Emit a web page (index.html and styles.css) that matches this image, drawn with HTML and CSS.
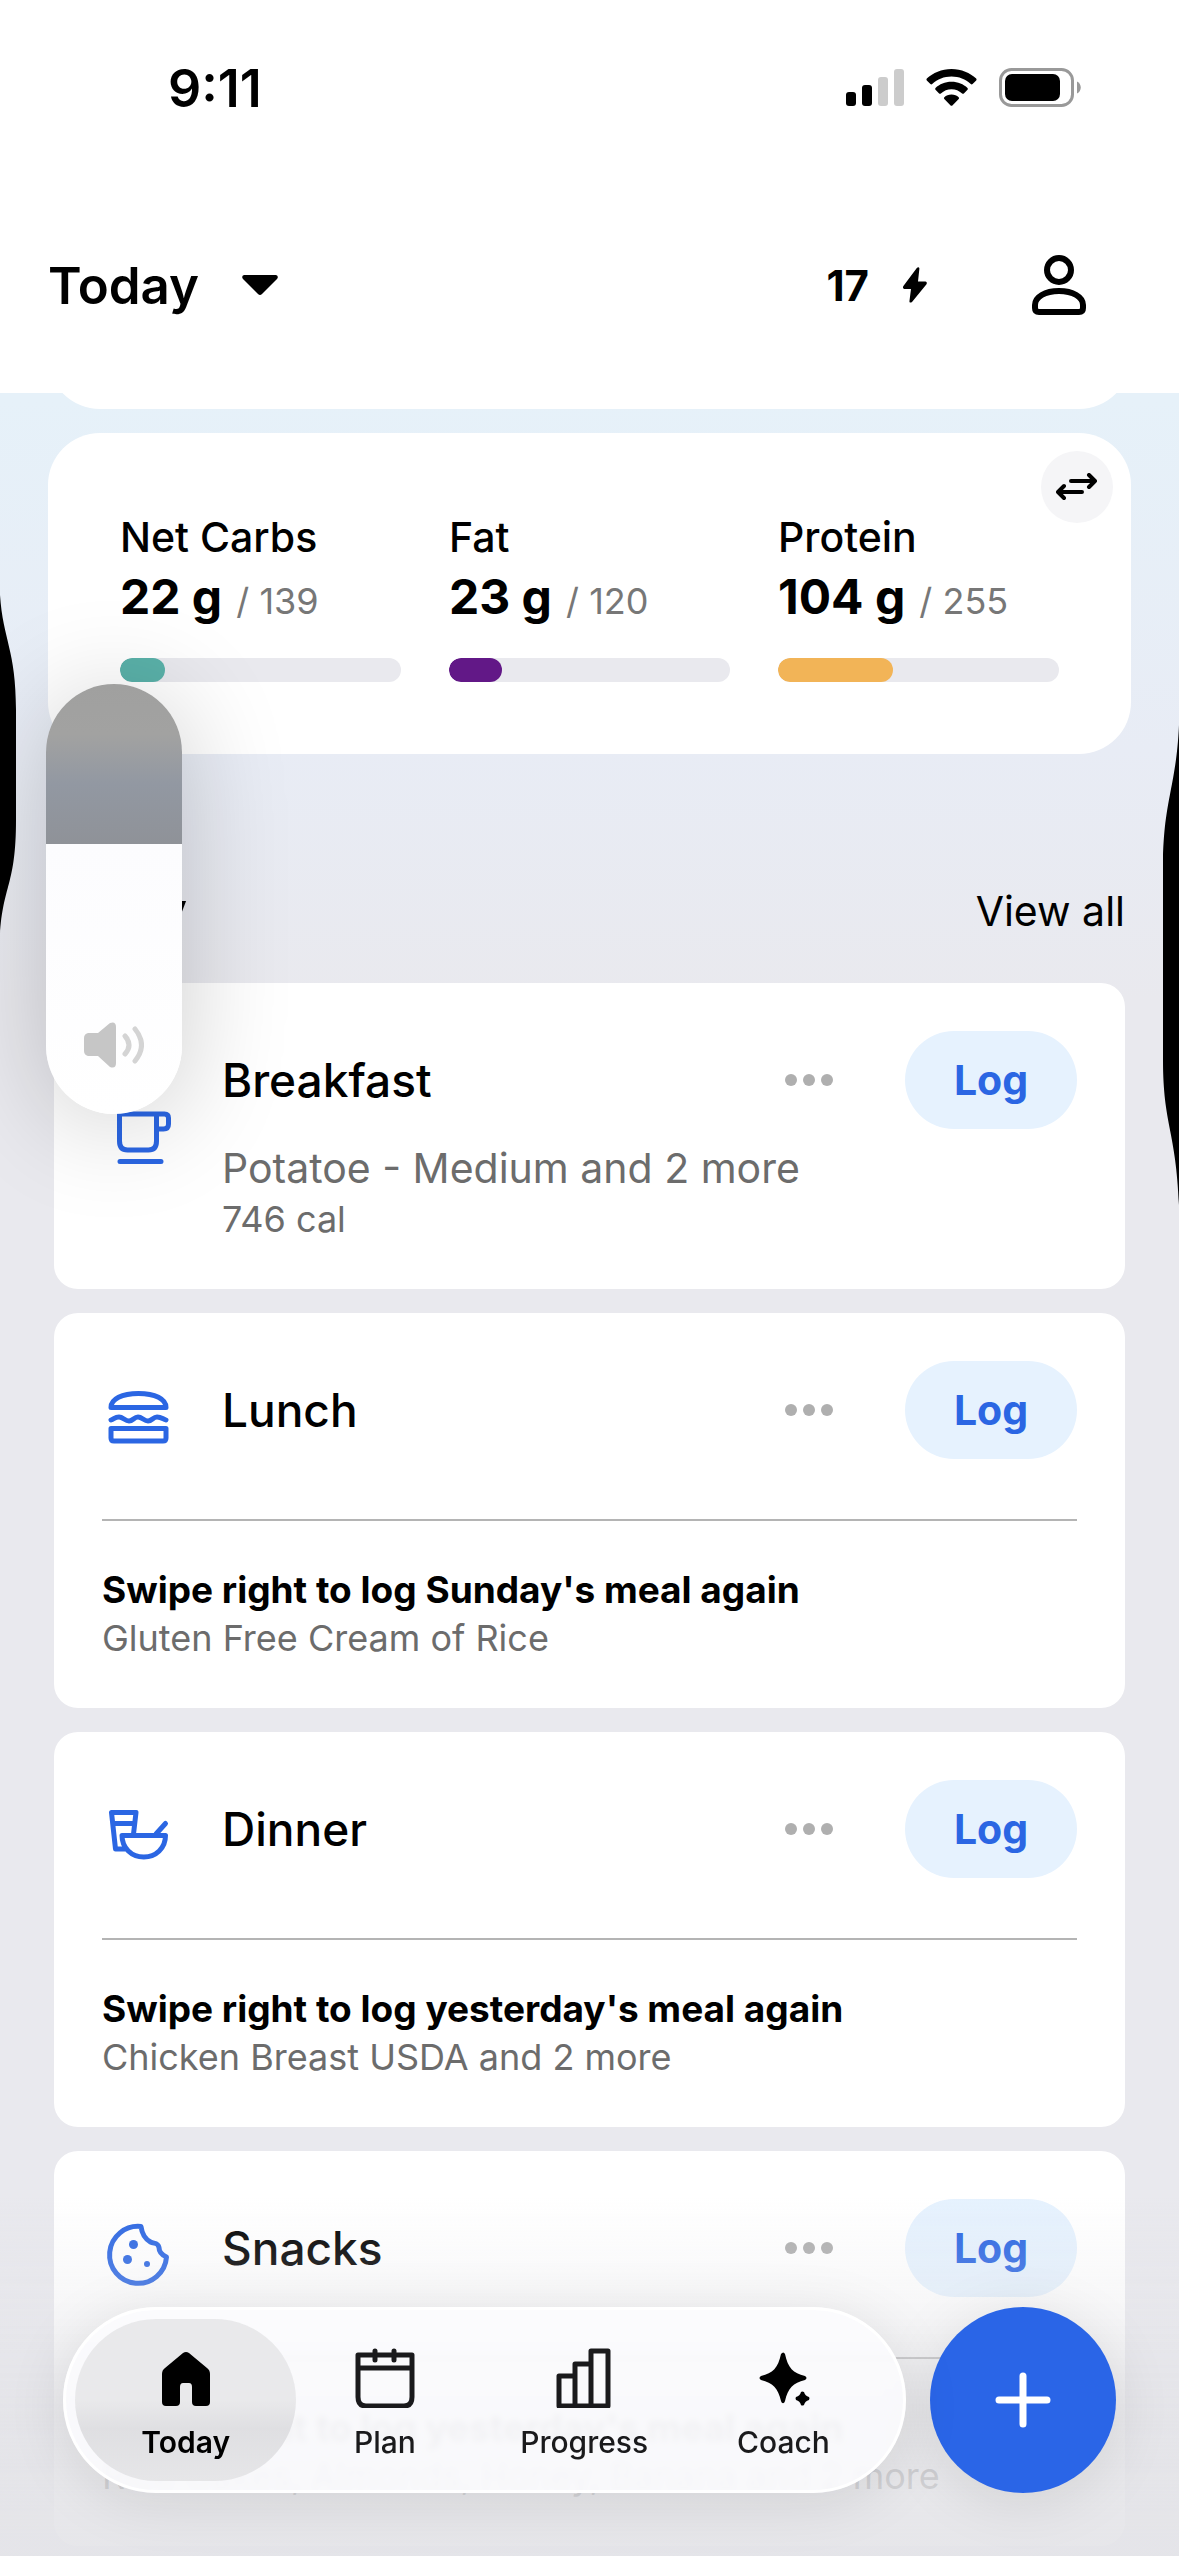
FILE: index.html
```html
<!DOCTYPE html>
<html lang="en">
<head>
    <meta charset="UTF-8">
    <meta name="viewport" content="width=device-width, initial-scale=1">
    <title>Today</title>
    <link rel="stylesheet" href="styles.css">
</head>
<body>
    <header class="header">
        <div class="status">
            <span class="clock">9:11</span>
            <div class="status-icons">
                <svg width="58" height="38" viewBox="0 0 58 38">
                    <rect x="0" y="23" width="10" height="14" rx="3"/>
                    <rect x="16" y="16" width="10" height="21" rx="3"/>
                    <rect x="32" y="8" width="10" height="29" rx="3" fill="#ccc"/>
                    <rect x="48" y="0" width="10" height="37" rx="3" fill="#ccc"/>
                </svg>
                <svg width="51" height="38" viewBox="0 0 51 38">
                    <path d="M25.500 0C35.500 0 44 4 50.200 9.600q.8.900 0 1.800L46.600 15q-.9.800-1.800 0C39.500 10.200 33 7.500 25.500 7.500S11.500 10.200 6.200 15q-.9.800-1.800 0L.8 11.400q-.8-.9 0-1.800C7 4 15.500 0 25.500 0z"/>
                    <path d="M25.500 12.800c6.500 0 12 2.400 16 6.200q.8.900 0 1.800l-3.600 3.600q-.9.800-1.800 0c-3-2.700-6.500-4.200-10.600-4.200s-7.600 1.500-10.600 4.200q-.9.800-1.800 0l-3.600-3.600q-.8-.9 0-1.800c4-3.800 9.500-6.200 16-6.200z"/>
                    <path d="M25.500 25.600c3 0 5.300 1 7.200 2.700q.8.900 0 1.800l-6.300 6.300q-.9.800-1.800 0l-6.300-6.300q-.8-.9 0-1.800c1.900-1.700 4.200-2.700 7.200-2.700z"/>
                </svg>
                <svg width="82" height="40" viewBox="0 0 82 40">
                    <rect x="1.500" y="1.500" width="72" height="36" rx="11" fill="none" stroke="#999" stroke-width="3"/>
                    <rect x="6" y="6" width="55" height="27" rx="7"/>
                    <path d="M78 13.500c5 2 5 10 0 12z" fill="#999"/>
                </svg>
            </div>
        </div>
        <div class="topbar">
            <button class="day-btn">
                Today
                <svg width="38" height="22" viewBox="0 0 38 22"><path d="M3 1h32q3 1 1 4L21 20q-2 2-4 0L2 5q-2-3 1-4z"/></svg>
            </button>
            <button class="streak-btn">
                17
                <svg width="24" height="36" viewBox="0 0 24 36"><path d="M14 .8q2-1.200 2.400.6L15 14.500h7.500q2 .6 1 2.800L9 35q-2.200 1.400-2.600-.6L8 22H1.200q-2-.8-.8-3z"/></svg>
            </button>
            <button class="profile-btn" aria-label="Profile">
                <svg width="54" height="60" viewBox="0 0 54 60" fill="none" stroke="#000" stroke-width="6">
                    <circle cx="27" cy="15" r="12"/>
                    <path d="M3 50C3 42 13 36 27 36s24 6 24 14v3q0 4-4 4H7q-4 0-4-4z"/>
                </svg>
            </button>
        </div>
    </header>

    <main>
        <div class="panel panel-prev"></div>
        <section class="panel macros">
            <div class="macro">
                <div class="macro-name">Net Carbs</div>
                <div class="macro-value"><b>22 g</b> <span>/ 139</span></div>
                <div class="bar"><div class="fill teal" style="width: 16%"></div></div>
            </div>
            <div class="macro">
                <div class="macro-name">Fat</div>
                <div class="macro-value"><b>23 g</b> <span>/ 120</span></div>
                <div class="bar"><div class="fill purple" style="width: 19%"></div></div>
            </div>
            <div class="macro">
                <div class="macro-name">Protein</div>
                <div class="macro-value"><b>104 g</b> <span>/ 255</span></div>
                <div class="bar"><div class="fill orange" style="width: 41%"></div></div>
            </div>
            <button class="swap-btn" aria-label="Switch view">
                <svg width="42" height="28" viewBox="0 0 42 28" fill="none" stroke="#000" stroke-width="4" stroke-linecap="round" stroke-linejoin="round">
                    <path d="M15 8h24M33 2l6 6-6 6M26 19H3M8 13l-6 6 6 6"/>
                </svg>
            </button>
        </section>

        <section class="diary">
            <div class="diary-head">
                <h2>Diary</h2>
                <a href="#">View all</a>
            </div>

            <article class="meal">
                <div class="meal-main">
                    <svg class="meal-icon" viewBox="0 0 72 72">
                        <path d="M17.500 12h37v27c0 6-3 9-8 9h-21c-5 0-8-3-8-9zM54.500 12h8q4 0 4 4v6q0 5-5 5h-7M18 59.500h41"/>
                    </svg>
                    <div class="meal-body">
                        <div class="meal-row">
                            <h3>Breakfast</h3>
                            <button class="more-btn" aria-label="More"><i></i><i></i><i></i></button>
                            <button class="log-btn">Log</button>
                        </div>
                        <p class="foods">Potatoe - Medium and 2 more</p>
                        <p class="cals">746 cal</p>
                    </div>
                </div>
            </article>

            <article class="meal">
                <div class="meal-main">
                    <svg class="meal-icon" viewBox="0 0 72 72">
                        <path d="M9 26.500C9 18 20 12.500 36.500 12.500S64 18 64 26.500zM9 39c3-1 4-3 8-3s6 4 10 4 5-4 9-4 6 4 10 4 5-4 9-4 6 2 9 3M9 47.500h55V57q0 3-3 3H12q-3 0-3-3z"/>
                    </svg>
                    <div class="meal-body">
                        <div class="meal-row">
                            <h3>Lunch</h3>
                            <button class="more-btn" aria-label="More"><i></i><i></i><i></i></button>
                            <button class="log-btn">Log</button>
                        </div>
                    </div>
                </div>
                <div class="again">
                    <strong>Swipe right to log Sunday's meal again</strong>
                    <p>Gluten Free Cream of Rice</p>
                </div>
            </article>

            <article class="meal">
                <div class="meal-main">
                    <svg class="meal-icon" viewBox="0 0 72 72">
                        <path d="M31.500 34L34 12.500H9.500L13.500 49h9M11 23.500h21M20 35.500h43.500C63.500 48 54 57 41.800 57S20 48 20 35.500zM54 34l9.500-10.500"/>
                    </svg>
                    <div class="meal-body">
                        <div class="meal-row">
                            <h3>Dinner</h3>
                            <button class="more-btn" aria-label="More"><i></i><i></i><i></i></button>
                            <button class="log-btn">Log</button>
                        </div>
                    </div>
                </div>
                <div class="again">
                    <strong>Swipe right to log yesterday's meal again</strong>
                    <p>Chicken Breast USDA and 2 more</p>
                </div>
            </article>

            <article class="meal">
                <div class="meal-main">
                    <svg class="meal-icon" viewBox="0 0 72 72">
                        <path d="M39 7.500A28.500 28.500 0 1 0 64.500 38C60 36 57 33 57 28.500 56 23 52 25 48.500 23 43 20 40 15 39 7.500z"/>
                        <g fill="#2b66e3" stroke="none"><circle cx="31.500" cy="25.500" r="4.500"/><circle cx="25.500" cy="40.500" r="4.500"/><circle cx="45" cy="45" r="3"/></g>
                    </svg>
                    <div class="meal-body">
                        <div class="meal-row">
                            <h3>Snacks</h3>
                            <button class="more-btn" aria-label="More"><i></i><i></i><i></i></button>
                            <button class="log-btn">Log</button>
                        </div>
                    </div>
                </div>
                <div class="again">
                    <strong>Swipe right to log yesterday's meal again</strong>
                    <p>Rice Cakes, Almonds, Honey, Banana and 2 more</p>
                </div>
            </article>
        </section>
    </main>

    <!-- Fade under the tab bar -->
    <div class="fade"></div>

    <div class="dock">
        <nav class="tabs">
            <a href="#" class="active">
                <svg viewBox="0 0 60 60"><path d="M27 5q3-2 6 0l18 15q3 2 3 6v28q0 4-4 4H40q-4 0-4-4V39q0-4-3-4h-6q-3 0-3 4v15q0 4-4 4H10q-4 0-4-4V26q0-4 3-6z"/></svg>
                Today
            </a>
            <a href="#">
                <svg viewBox="0 0 60 60" fill="none" stroke="#1a1a1c" stroke-width="5" stroke-linecap="round" stroke-linejoin="round"><path d="M3 7h54v42q0 9-8 9H11q-8 0-8-9zM3 20h54M20 3v9M39 3v9"/></svg>
                Plan
            </a>
            <a href="#">
                <svg viewBox="0 0 60 60" fill="none" stroke="#1a1a1c" stroke-width="5" stroke-linejoin="round"><path d="M5 58V28h16V16h16V3h17v55zM21 28v30M37 16v42"/></svg>
                Progress
            </a>
            <a href="#">
                <svg viewBox="0 0 60 60"><path d="M28 6c1.500-2 3-2 4 0 3 14 8 19 20 22q3 2 0 4c-12 3-17 8-20 21-1 3-3 3-4 0-3-13-8-18-20-21q-3-2 0-4c12-3 17-8 20-22z"/><path d="M48 44q1-1 3 0 1 4 5 5 1 1 0 3-4 1-5 5-2 1-3 0-1-4-5-5-1-2 0-3 4-1 5-5z"/></svg>
                Coach
            </a>
        </nav>
        <button class="add-btn" aria-label="Add">
            <svg width="56" height="56" viewBox="0 0 56 56" stroke="#fff" stroke-width="7" stroke-linecap="round"><path d="M28 4v48M4 28h48"/></svg>
        </button>
    </div>

    <!-- Volume overlay and the side button bulges -->
    <div class="volume">
        <input type="range" min="0" max="100" value="63" aria-label="Volume">
        <svg width="60" height="46" viewBox="0 0 60 46">
            <path d="M4 11h10L26 1q6-2 6 4v36q0 6-6 4L14 34H4q-4-1-4-5V16q0-4 4-5z" fill="#c6c6c6"/>
            <path d="M41 14q8 9 0 18M51 7q13 16 0 32" fill="none" stroke="#d4d4d4" stroke-width="5" stroke-linecap="round"/>
        </svg>
    </div>
    <svg class="bulge bulge-left" viewBox="0 0 16 340"><path d="M0 0C3 45 16 55 16 115v110C16 290 3 290 0 340z"/></svg>
    <svg class="bulge bulge-right" viewBox="0 0 16 480"><path d="M16 0C13 65 0 75 0 145v190C0 400 13 405 16 480z"/></svg>
</body>
</html>
```
FILE: styles.css
```css
* {
    box-sizing: border-box;
}
body {
    margin: 0;
    font-family: Inter, "Liberation Sans", sans-serif;
    color: #000;
    background: #e9e9ee linear-gradient(#e6f1f9 400px, #e8ecf5 750px, #e9e9ee 1000px) no-repeat;
    overflow-x: hidden;
}
h2, h3, p {
    margin: 0;
}
button {
    padding: 0;
    border: none;
    background: none;
    font: inherit;
    color: inherit;
    cursor: pointer;
}
a {
    color: inherit;
    text-decoration: none;
}

/* header */
.header {
    position: relative;
    z-index: 2;
    height: 393px;
    background: #fff;
}
.status {
    display: flex;
    justify-content: space-between;
    align-items: center;
    height: 176px;
    padding: 0 98px 0 168px;
}
.clock {
    font-size: 52px;
    font-weight: 600;
}
.status-icons {
    display: flex;
    align-items: center;
    gap: 22px;
}
.topbar {
    display: flex;
    align-items: center;
    height: 218px;
    padding: 0 93px 0 48px;
}
.day-btn, .streak-btn {
    display: flex;
    align-items: center;
}
.day-btn {
    gap: 42px;
    margin-right: auto;
    font-size: 51px;
    font-weight: 600;
}
.streak-btn {
    gap: 34px;
    margin-right: 105px;
    font-size: 42px;
    font-weight: 700;
}
.profile-btn svg {
    display: block;
}

/* macros */
.panel {
    margin: 0 48px;
    background: #fff;
    border-radius: 52px;
}
.panel-prev {
    height: 64px;
    margin-top: -48px;
    border-radius: 0 0 52px 52px;
}
.macros {
    position: relative;
    display: grid;
    grid-template-columns: repeat(3, 1fr);
    gap: 48px;
    margin-top: 24px;
    padding: 76px 72px 72px;
}
.macro-name {
    font-size: 41px;
    font-weight: 500;
    line-height: 56px;
}
.macro-value {
    height: 64px;
    line-height: 64px;
    white-space: nowrap;
    color: #777;
    font-size: 36px;
}
.macro-value b {
    margin-right: 4px;
    font-size: 48px;
    color: #000;
}
.bar {
    height: 24px;
    margin-top: 29px;
    border-radius: 12px;
    background: #e9e9ee;
    overflow: hidden;
}
.fill {
    height: 100%;
    border-radius: 12px;
}
.teal {
    background: #5ab1a9;
}
.purple {
    background: #621887;
}
.orange {
    background: #f2b457;
}
.swap-btn {
    position: absolute;
    top: 18px;
    right: 18px;
    display: flex;
    align-items: center;
    justify-content: center;
    width: 72px;
    height: 72px;
    border-radius: 50%;
    background: #f5f5f7;
}

/* diary */
.diary {
    display: flex;
    flex-direction: column;
    gap: 24px;
    padding: 124px 54px 12px;
}
.diary-head {
    display: flex;
    justify-content: space-between;
    align-items: center;
    height: 81px;
    padding-bottom: 16px;
}
.diary-head h2 {
    font-size: 52px;
    font-weight: 600;
}
.diary-head a {
    font-size: 41px;
}
.meal {
    padding: 48px 48px 45px;
    border-radius: 24px;
    background: #fff;
}
.meal-main {
    display: flex;
    align-items: center;
    gap: 48px;
    min-height: 112px;
}
.meal-icon {
    flex: none;
    width: 72px;
    height: 72px;
    fill: none;
    stroke: #2b66e3;
    stroke-width: 5;
    stroke-linecap: round;
    stroke-linejoin: round;
}
.meal-body {
    flex: 1;
    align-self: flex-start;
}
.meal-row {
    display: flex;
    align-items: center;
}
.meal-row h3 {
    flex: 1;
    font-size: 46px;
    font-weight: 500;
}
.more-btn {
    display: flex;
    gap: 6px;
    margin-right: 72px;
}
.more-btn i {
    width: 12px;
    height: 12px;
    border-radius: 50%;
    background: #afafaf;
}
.log-btn {
    width: 172px;
    height: 98px;
    border-radius: 49px;
    background: #e6f2fe;
    color: #2b66e3;
    font-size: 41px;
    font-weight: 700;
}
.foods {
    margin-top: 12px;
    font-size: 41px;
    line-height: 54px;
    color: #6c6c6c;
}
.cals, .again {
    font-size: 36px;
    line-height: 49px;
    color: #6c6c6c;
}
.again {
    margin-top: 46px;
    padding-top: 44px;
    border-top: 2px solid #b4b4b4;
    white-space: nowrap;
}
.again strong {
    display: block;
    font-size: 37px;
    font-weight: 700;
    color: #000;
}

/* bottom dock */
.fade {
    position: fixed;
    bottom: 0;
    left: 0;
    right: 0;
    height: 360px;
    background: linear-gradient(rgba(227, 227, 231, 0), rgba(227, 227, 231, .25) 28%, rgba(227, 227, 231, .76) 60%, rgba(228, 228, 232, .9) 95%);
    pointer-events: none;
}
.dock {
    position: fixed;
    left: 63px;
    right: 63px;
    bottom: 63px;
    display: flex;
    gap: 24px;
}
.tabs {
    flex: 1;
    display: flex;
    height: 186px;
    padding: 0 20px;
    border-radius: 93px;
    border: 3px solid #fff;
    background: rgba(251, 251, 254, .86);
    backdrop-filter: blur(3px);
    box-shadow: 0 8px 60px rgba(0, 0, 0, .1);
}
.tabs a {
    position: relative;
    flex: 1 1 0;
    min-width: 0;
    display: flex;
    flex-direction: column;
    align-items: center;
    gap: 16px;
    padding-top: 38px;
    font-size: 30px;
    line-height: 36px;
    font-weight: 500;
    color: #1a1a1c;
}
.tabs svg {
    position: relative;
    width: 60px;
    height: 60px;
}
.tabs .active {
    z-index: 0;
    font-weight: 600;
    color: #000;
}
.tabs .active::before {
    content: "";
    position: absolute;
    z-index: -1;
    inset: 9px -11px;
    border-radius: 81px;
    background: linear-gradient(#e9e9eb 50%, #dfdfe2 68%, #e6e6e8);
}
.add-btn {
    display: flex;
    align-items: center;
    justify-content: center;
    width: 186px;
    height: 186px;
    border-radius: 50%;
    background: #2a65e7;
    box-shadow: 0 8px 60px rgba(0, 0, 0, .1);
}

/* volume */
.volume {
    position: fixed;
    z-index: 3;
    top: 684px;
    left: 46px;
    width: 136px;
    height: 430px;
    border-radius: 68px;
    overflow: hidden;
    box-shadow: 0 10px 110px rgba(0, 0, 0, .2);
}
.volume input {
    appearance: none;
    writing-mode: vertical-lr;
    direction: rtl;
    display: block;
    width: 100%;
    height: 100%;
    margin: 0;
    background: linear-gradient(#a0a09f, #a2a2a1 50px, #9298a2 100px, #8f9298 160px, #fcfcfe 160px, #fff);
}
.volume input::-webkit-slider-thumb {
    appearance: none;
    width: 1px;
    height: 1px;
}
.volume svg {
    position: absolute;
    left: 38px;
    bottom: 46px;
}
.bulge {
    position: fixed;
    z-index: 3;
    width: 16px;
}
.bulge-left {
    top: 595px;
    left: 0;
    height: 340px;
}
.bulge-right {
    top: 725px;
    right: 0;
    height: 480px;
}
```
